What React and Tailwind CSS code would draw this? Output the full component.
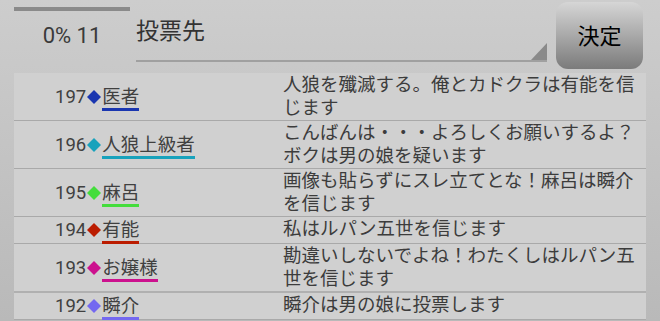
import React from "react";

const rows = [
  { no: 197, name: "医者", color: "#1a36b0", msg: "人狼を殲滅する。俺とカドクラは有能を信じます" },
  { no: 196, name: "人狼上級者", color: "#18a2bc", msg: "こんばんは・・・よろしくお願いするよ？ボクは男の娘を疑います" },
  { no: 195, name: "麻呂", color: "#44dd3c", msg: "画像も貼らずにスレ立てとな！麻呂は瞬介を信じます" },
  { no: 194, name: "有能", color: "#bb1c00", msg: "私はルパン五世を信じます" },
  { no: 193, name: "お嬢様", color: "#cc118e", msg: "勘違いしないでよね！わたくしはルパン五世を信じます", thick: true },
  { no: 192, name: "瞬介", color: "#7468f0", msg: "瞬介は男の娘に投票します" },
];

const font = { fontFamily: '"Roboto", "Noto Sans CJK JP", sans-serif' };

export default function App() {
  return (
    <div
      className="w-[660px] h-[321px] overflow-hidden bg-linear-to-b from-[#cdcdcd] to-[#b9b9b9]"
      style={font}
    >
      <div className="h-[73px] flex items-start">
        <div className="ml-[14px] mt-[7px] w-[116px] border-t-4 border-[#8a8a8a] pt-[12px] text-center text-[22px] leading-[26px] text-[#3a3a3a]">
          0% 11
        </div>
        <div className="relative ml-[6px] w-[411px] h-[62px] border-b-2 border-[#a0a0a0]">
          <div className="pt-[17px] text-[23px] leading-[30px] text-[#333]">投票先</div>
          <svg className="absolute right-0 bottom-0" width="16" height="17" viewBox="0 0 16 17">
            <polygon points="16,0 16,17 0,17" fill="#8a8a8a" />
          </svg>
        </div>
        <div className="ml-[9px] mt-[2px] w-[87px] h-[67px] rounded-[12px] bg-linear-to-b from-[#d6d6d6] via-[#a9a9a9] to-[#7b7b7b] flex items-center justify-center pt-[2px] text-[22px] text-black">
          決定
        </div>
      </div>
      <div className="mx-[14px] w-[632px] bg-[#d0d0d0]">
        {rows.map((r) => (
          <div
            key={r.no}
            className={`flex py-[1px] min-h-[27px] ${r.thick ? "border-b-2 border-[#b0b0b0]" : "border-b border-[#a9a9a9]"}`}
          >
            <div className="w-[269px] shrink-0 pl-[41px] flex items-center text-[18.5px] leading-[22px] text-[#404040]">
              <span>{r.no}</span>
              <svg width="14" height="14" viewBox="0 0 14 14" className="mx-[1px]">
                <polygon points="7,0 14,7 7,14 0,7" fill={r.color} />
              </svg>
              <span
                className="inline-block leading-[22px] border-b-[3px] -mb-[3px]"
                style={{ borderColor: r.color }}
              >
                {r.name}
              </span>
            </div>
            <div className="w-[356px] text-[18.5px] leading-[22.5px] text-[#3c3c3c]">{r.msg}</div>
          </div>
        ))}
      </div>
    </div>
  );
}
